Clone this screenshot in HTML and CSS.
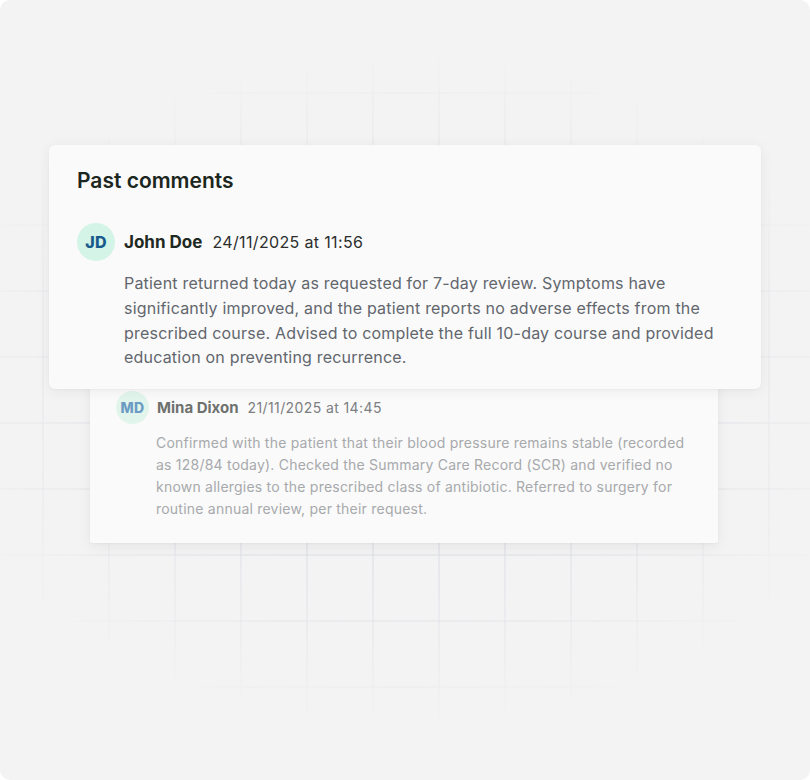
FILE: index.html
```html
<!DOCTYPE html>
<html lang="en">
<head>
<meta charset="utf-8">
<title>Past comments</title>
<link rel="stylesheet" href="styles.css">
</head>
<body>
<div class="canvas">
  <div class="stack">
    <section class="card card-front">
      <h2 class="title">Past comments</h2>
      <div class="comment">
        <div class="head">
          <div class="avatar">JD</div>
          <span class="name">John Doe</span>
          <span class="date">24/11/2025 at 11:56</span>
        </div>
        <p class="body">Patient returned today as requested for 7-day review. Symptoms have significantly improved, and the patient reports no adverse effects from the prescribed course. Advised to complete the full 10-day course and provided education on preventing recurrence.</p>
      </div>
    </section>
    <section class="card card-back">
      <div class="comment">
        <div class="head">
          <div class="avatar">MD</div>
          <span class="name">Mina Dixon</span>
          <span class="date">21/11/2025 at 14:45</span>
        </div>
        <p class="body">Confirmed with the patient that their blood pressure remains stable (recorded as 128/84 today). Checked the Summary Care Record (SCR) and verified no known allergies to the prescribed class of antibiotic. Referred to surgery for routine annual review, per their request.</p>
      </div>
    </section>
  </div>
</div>
</body>
</html>
```

FILE: styles.css
```css
html, body {
  margin: 0;
  padding: 0;
  background: #ffffff;
}

body {
  font-family: "Inter", "Liberation Sans", sans-serif;
}

.canvas {
  position: relative;
  width: 810px;
  height: 780px;
  background: #f3f3f3;
  border-radius: 10px;
  overflow: hidden;
}

.canvas::before {
  content: "";
  position: absolute;
  inset: 0;
  background-image:
    linear-gradient(to right, #dcdde6 1.5px, transparent 1.5px),
    linear-gradient(to bottom, #dcdde6 1.5px, transparent 1.5px);
  background-size: 66px 66px;
  background-position: 42.5px 26.5px;
  -webkit-mask-image: radial-gradient(ellipse 480px 335px at 405px 390px, #000 0%, #000 55%, transparent 100%);
  mask-image: radial-gradient(ellipse 480px 335px at 405px 390px, #000 0%, #000 55%, transparent 100%);
}

.stack {
  position: relative;
  display: flex;
  flex-direction: column;
  align-items: flex-start;
  padding: 145px 0 0 49px;
}

.card {
  box-sizing: border-box;
  background: #fafafa;
}

.card-front {
  position: relative;
  z-index: 2;
  width: 712px;
  padding: 21px 28px 19px 28px;
  border-radius: 6px;
  box-shadow: 0 2px 14px rgba(0, 0, 0, 0.06), 0 1px 2px rgba(0, 0, 0, 0.03);
}

.card-back {
  position: relative;
  z-index: 1;
  width: 628px;
  margin: -20px 0 0 41px;
  padding: 22px 26px 23px 26px;
  border-radius: 2px;
  box-shadow: 0 4px 14px rgba(0, 0, 0, 0.06), 0 1px 2px rgba(0, 0, 0, 0.03);
}

.title {
  margin: 0 0 28px 0;
  font-size: 21px;
  line-height: 29px;
  font-weight: 600;
  color: #1c2620;
}

.head {
  display: flex;
  align-items: center;
}

.avatar {
  flex: none;
  display: flex;
  align-items: center;
  justify-content: center;
  border-radius: 50%;
  font-weight: 800;
  letter-spacing: 0.3px;
}

.card-front .avatar {
  width: 38px;
  height: 38px;
  margin-right: 9px;
  background: #d3f4e6;
  color: #175b8c;
  font-size: 16px;
}

.card-back .avatar {
  width: 33px;
  height: 33px;
  margin-right: 8px;
  background: #e2f5ed;
  color: #6b9cc1;
  font-size: 14px;
}

.name {
  font-weight: 700;
}

.card-front .name {
  font-size: 17px;
  color: #1f2922;
  margin-right: 10px;
}

.card-back .name {
  font-size: 15px;
  color: #6e716e;
  margin-right: 9px;
}

.card-front .date {
  font-size: 16px;
  letter-spacing: 0.35px;
  color: #2b2e2c;
}

.card-back .date {
  font-size: 14px;
  letter-spacing: 0.4px;
  color: #7c7e7f;
}

.body {
  margin: 0;
}

.card-front .body {
  margin: 10px 0 0 47px;
  font-size: 16px;
  line-height: 24.8px;
  letter-spacing: 0.2px;
  color: #62666d;
}

.card-back .body {
  margin: 8px 0 0 40px;
  font-size: 14px;
  line-height: 22px;
  letter-spacing: 0.22px;
  color: #a7a9ac;
}
```
